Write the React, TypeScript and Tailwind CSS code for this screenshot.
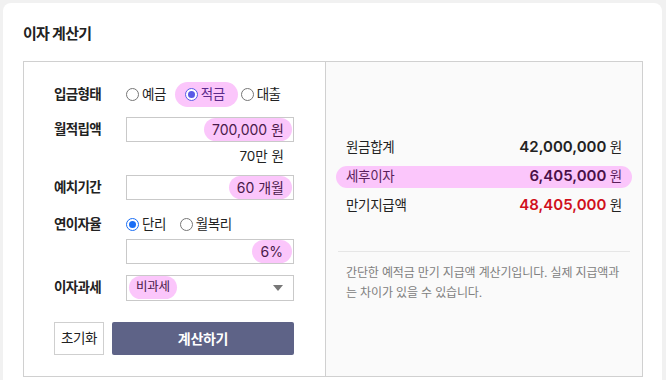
import React from 'react';

const FONT = { fontFamily: 'Inter, "Noto Sans CJK KR", sans-serif' };

// pink marker used on the highlighted values
const Mark = ({ children, className = '' }: { children: React.ReactNode; className?: string }) => (
  <span className={`rounded-full bg-[#fbc6fb] text-[#4a1a4a] ${className}`}>{children}</span>
);

const Radio = ({ checked, color = '#1a6ef5' }: { checked?: boolean; color?: string }) => (
  <span
    className="inline-flex h-[13px] w-[13px] items-center justify-center rounded-full border bg-white"
    style={{ borderColor: checked ? color : '#767676' }}
  >
    {checked && <span className="h-[7px] w-[7px] rounded-full" style={{ backgroundColor: color }} />}
  </span>
);

const Label = ({ children }: { children: React.ReactNode }) => (
  <div className="w-[72px] shrink-0 text-[13.5px] font-bold tracking-[-0.7px] text-[#222]">{children}</div>
);

const Box = ({ children, className = '' }: { children: React.ReactNode; className?: string }) => (
  <div className={`flex h-[25px] w-[168px] items-center border border-[#c9c9c9] bg-white ${className}`}>{children}</div>
);

export default function App() {
  return (
    <div className="h-[380px] w-[666px] overflow-hidden bg-[#f1f1f1] pl-[3px] pt-[3px]" style={FONT}>
      <div className="h-[400px] w-[659px] rounded-t-lg bg-white px-5 pt-[20px]">
        <h1 className="text-[15px] font-bold tracking-[-0.7px] text-[#222]">이자 계산기</h1>

        <div className="mt-[15px] flex h-[316px] w-[620px] border border-[#d0d0d0]">
          {/* inputs */}
          <div className="w-[302px] shrink-0 border-r border-[#d0d0d0] pl-[30px] pt-[22px]">
            <div className="flex h-[22px] items-center">
              <Label>입금형태</Label>
              <div className="flex items-center text-[13.5px] tracking-[-0.5px] text-[#222]">
                <span className="flex items-center gap-[3px]"><Radio />예금</span>
                <Mark className="ml-[9px] flex items-center gap-[3px] py-[2px] pl-[10px] pr-[13px] text-[#5a2a8a]">
                  <Radio checked color="#5a5ae6" />적금
                </Mark>
                <span className="ml-[3px] flex items-center gap-[3px]"><Radio />대출</span>
              </div>
            </div>

            <div className="mt-[11px] flex items-center">
              <Label>월적립액</Label>
              <Box className="justify-end pr-[1px]">
                <Mark className="px-[8px] py-[1px] text-[14px]">700,000 원</Mark>
              </Box>
            </div>
            <div className="flex h-[30px] w-[230px] items-center justify-end whitespace-nowrap text-[13.5px] text-[#222]">70만 원</div>

            <div className="mt-[3px] flex items-center">
              <Label>예치기간</Label>
              <Box className="justify-end pr-[1px]">
                <Mark className="px-[8px] py-[1px] text-[14px]">60 개월</Mark>
              </Box>
            </div>

            <div className="mt-[14px] flex h-[22px] items-center">
              <Label>연이자율</Label>
              <div className="flex items-center gap-[14px] text-[13.5px] tracking-[-0.5px] text-[#222]">
                <span className="flex items-center gap-[3px]"><Radio checked />단리</span>
                <span className="flex items-center gap-[3px]"><Radio />월복리</span>
              </div>
            </div>
            <div className="ml-[72px] mt-[3px]">
              <Box className="justify-end pr-[1px]">
                <Mark className="px-[9px] py-[1px] text-[14px]">6%</Mark>
              </Box>
            </div>

            <div className="mt-[11px] flex items-center">
              <Label>이자과세</Label>
              <Box className="h-[26px] justify-between pl-[2px] pr-[10px]">
                <Mark className="px-[7px] py-[2px] text-[12.5px] tracking-[-0.3px]">비과세</Mark>
                <svg width="10" height="6" viewBox="0 0 10 6"><path d="M0 0h10L5 6z" fill="#777" /></svg>
              </Box>
            </div>

            <div className="mt-[21px] flex h-[33px] gap-2">
              <button className="w-[50px] border border-[#cfcfcf] bg-white text-[13.5px] tracking-[-0.5px] text-[#222]">초기화</button>
              <button className="w-[182px] rounded-[2px] bg-[#5e6387] text-[14px] font-bold tracking-[-0.3px] text-white">계산하기</button>
            </div>
          </div>

          {/* results */}
          <div className="flex-1 bg-[#fafafa] px-[12px] pt-[75px]">
            <div className="flex flex-col gap-[7px] text-[13.5px] tracking-[-0.3px] text-[#222]">
              <div className="flex h-[22px] items-center justify-between px-[8px]">
                <span>원금합계</span>
                <span><b className="text-[15px] font-semibold tracking-normal">42,000,000</b> 원</span>
              </div>
              <div className="-mx-[2px] flex h-[22px] items-center justify-between rounded-full bg-[#fbc6fb] px-[10px] text-[#5a1f5a]">
                <span>세후이자</span>
                <span><b className="text-[15px] font-semibold tracking-normal text-[#4a1048]">6,405,000</b> 원</span>
              </div>
              <div className="flex h-[22px] items-center justify-between px-[8px]">
                <span>만기지급액</span>
                <span><b className="text-[15px] font-semibold tracking-normal text-[#d0101c]">48,405,000</b> 원</span>
              </div>
            </div>
            <div className="mt-[34px] whitespace-nowrap border-t border-[#e6e6e6] px-[8px] pt-[11px] text-[12px] leading-[20px] tracking-[-0.15px] text-[#808080]">
              간단한 예적금 만기 지급액 계산기입니다. 실제 지급액과
              <br />
              는 차이가 있을 수 있습니다.
            </div>
          </div>
        </div>
      </div>
    </div>
  );
}
